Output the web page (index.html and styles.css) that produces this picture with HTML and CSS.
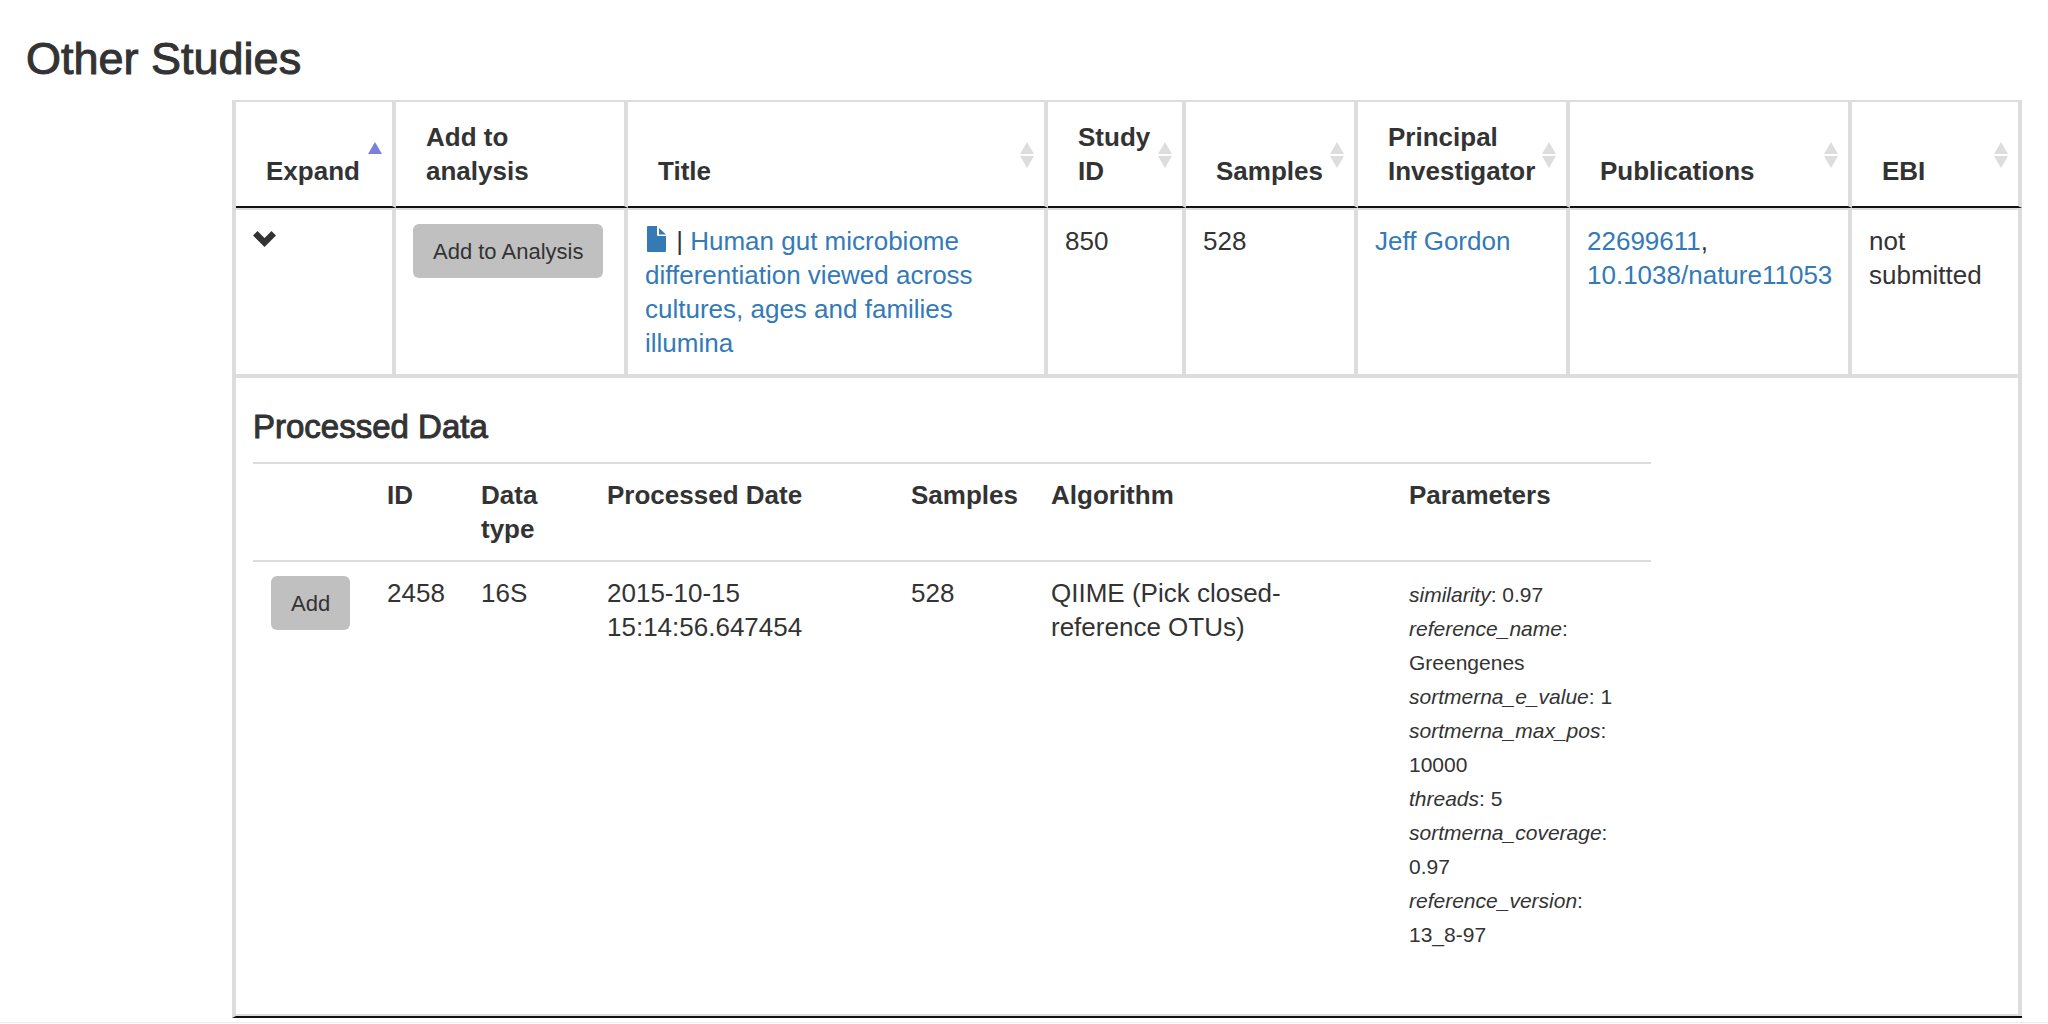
FILE: index.html
```html
<!DOCTYPE html>
<html lang="en">
<head>
<meta charset="utf-8">
<title>Other Studies</title>
<link rel="stylesheet" href="styles.css">
</head>
<body>
<svg class="sprite" aria-hidden="true">
  <symbol id="sort" viewBox="0 0 14 26"><path d="M7 0L14 12H0ZM0 14H14L7 26Z"/></symbol>
  <symbol id="sort-asc" viewBox="0 0 14 26"><path d="M7 0L14 12H0Z"/></symbol>
</svg>
<main class="page">
  <h2 class="page-title">Other Studies</h2>
  <div class="studies-wrap">
    <table class="studies">
      <colgroup>
        <col class="c-expand"><col class="c-add"><col><col class="c-id"><col class="c-samples"><col class="c-pi"><col class="c-pubs"><col class="c-ebi">
      </colgroup>
      <thead>
        <tr>
          <th scope="col" aria-sort="ascending"><button class="sort" type="button">Expand<svg class="sort-icon active"><use href="#sort-asc"/></svg></button></th>
          <th scope="col">Add to<br>analysis</th>
          <th scope="col"><button class="sort" type="button">Title<svg class="sort-icon"><use href="#sort"/></svg></button></th>
          <th scope="col"><button class="sort" type="button">Study ID<svg class="sort-icon"><use href="#sort"/></svg></button></th>
          <th scope="col"><button class="sort" type="button">Samples<svg class="sort-icon"><use href="#sort"/></svg></button></th>
          <th scope="col"><button class="sort" type="button">Principal Investigator<svg class="sort-icon"><use href="#sort"/></svg></button></th>
          <th scope="col"><button class="sort" type="button">Publications<svg class="sort-icon"><use href="#sort"/></svg></button></th>
          <th scope="col"><button class="sort" type="button">EBI<svg class="sort-icon"><use href="#sort"/></svg></button></th>
        </tr>
      </thead>
      <tbody>
        <tr class="study">
          <td><button class="toggle" type="button" aria-label="Collapse study" aria-expanded="true"><svg class="chevron" viewBox="0 0 23 16"><path d="M0 4.5L4.5 0L11.5 7L18.5 0L23 4.5L11.5 16Z"/></svg></button></td>
          <td><button class="btn" type="button">Add to Analysis</button></td>
          <td><a href="#" aria-label="Abstract"><svg class="file" viewBox="0 0 24 26"><path d="M3 0H12V9Q12 10 13 10H21V25Q21 26 20 26H3Q2 26 2 25V1Q2 0 3 0ZM14 2L21 8.500H14.500Q14 8.500 14 8Z"/></svg></a> | <a href="#">Human gut microbiome differentiation viewed across cultures, ages and families illumina</a></td>
          <td>850</td>
          <td>528</td>
          <td><a href="#">Jeff Gordon</a></td>
          <td><a href="#">22699611</a>, <a class="doi" href="#">10.1038/nature11053</a></td>
          <td>not submitted</td>
        </tr>
        <tr class="details">
          <td colspan="8">
            <h4 class="details-title">Processed Data</h4>
            <table class="processed">
              <colgroup>
                <col class="p-add"><col class="p-id"><col class="p-type"><col class="p-date"><col class="p-samples"><col class="p-algorithm"><col>
              </colgroup>
              <thead>
                <tr>
                  <td></td>
                  <th scope="col">ID</th>
                  <th scope="col">Data type</th>
                  <th scope="col">Processed Date</th>
                  <th scope="col">Samples</th>
                  <th scope="col">Algorithm</th>
                  <th scope="col">Parameters</th>
                </tr>
              </thead>
              <tbody>
                <tr>
                  <td><button class="btn" type="button">Add</button></td>
                  <td>2458</td>
                  <td>16S</td>
                  <td>2015-10-15 15:14:56.647454</td>
                  <td>528</td>
                  <td>QIIME (Pick closed-reference OTUs)</td>
                  <td><small class="params"><i>similarity</i>: 0.97<br><i>reference_name</i>: Greengenes<br><i>sortmerna_e_value</i>: 1<br><i>sortmerna_max_pos</i>: 10000<br><i>threads</i>: 5<br><i>sortmerna_coverage</i>: 0.97<br><i>reference_version</i>: 13_8-97</small></td>
                </tr>
              </tbody>
            </table>
          </td>
        </tr>
      </tbody>
    </table>
  </div>
</main>
<hr class="rule">
</body>
</html>
```
FILE: styles.css
```css
* {
  box-sizing: border-box;
}

body {
  margin: 0;
  background: #fff;
  color: #333;
  font: 26px/34px "Liberation Sans", Arial, sans-serif;
}

a {
  color: #337ab7;
  text-decoration: none;
}

button {
  margin: 0;
  border: 0;
  color: inherit;
  font: inherit;
  cursor: pointer;
}

.sprite {
  display: none;
}

.page {
  padding: 35px 26px 4px;
}

.page-title,
.details-title {
  font-weight: 500;
  -webkit-text-stroke: 1px currentColor;
}

.page-title {
  margin: 0 0 17px;
  font-size: 45px;
  line-height: 48px;
}

.details-title {
  margin: 17px 0;
  font-size: 33px;
  line-height: 36px;
}

.studies-wrap {
  margin-left: 206px;
}

table {
  border-spacing: 0;
  table-layout: fixed;
}

th,
td {
  text-align: left;
  vertical-align: top;
}

/* Study list */
.studies {
  width: 100%;
  border-top: 2px solid #ddd;
  border-left: 4px solid #ddd;
  border-bottom: 2px solid #111;
}

.c-expand { width: 160px; }
.c-add { width: 232px; }
.c-id { width: 138px; }
.c-samples { width: 172px; }
.c-pi { width: 212px; }
.c-pubs { width: 282px; }
.c-ebi { width: 170px; }

.studies > thead th {
  position: relative;
  padding: 18px 30px;
  border-right: 4px solid #ddd;
  border-bottom: 2px solid #111;
  vertical-align: bottom;
}

.studies > tbody > tr > td {
  padding: 14px 17px;
  border-right: 4px solid #ddd;
}

.study > td {
  border-top: 2px solid #ddd;
  border-bottom: 4px solid #ddd;
}

.details > td {
  border-bottom: 2px solid #ddd;
}

.sort {
  display: block;
  padding: 0;
  background: none;
  text-align: left;
}

.sort-icon {
  position: absolute;
  right: 10px;
  bottom: 38px;
  width: 14px;
  height: 26px;
  fill: #ddd;
}

.sort-icon.active {
  fill: #7b80e0;
}

.toggle {
  display: block;
  padding: 7px 0;
  background: none;
}

.chevron {
  display: block;
  width: 23px;
  height: 16px;
  fill: #333;
}

.file {
  width: 24px;
  height: 26px;
  fill: currentColor;
  vertical-align: -2px;
}

.doi {
  white-space: nowrap;
}

.btn {
  display: block;
  padding: 11px 20px 9px;
  border-radius: 6px;
  background: #c0c0c0;
  font-size: 22px;
  white-space: nowrap;
}

/* Processed data of the open study */
.processed {
  width: 80%;
  margin-bottom: 36px;
}

.p-add { width: 116px; }
.p-id { width: 94px; }
.p-type { width: 126px; }
.p-date { width: 304px; }
.p-samples { width: 140px; }
.p-algorithm { width: 358px; }

.processed th,
.processed td {
  padding: 14px 18px;
  border-top: 2px solid #ddd;
}

.params {
  font-size: 21px;
  line-height: 28px;
}

.rule {
  margin: 0;
  border: 0;
  border-top: 1px solid #eee;
}
```
